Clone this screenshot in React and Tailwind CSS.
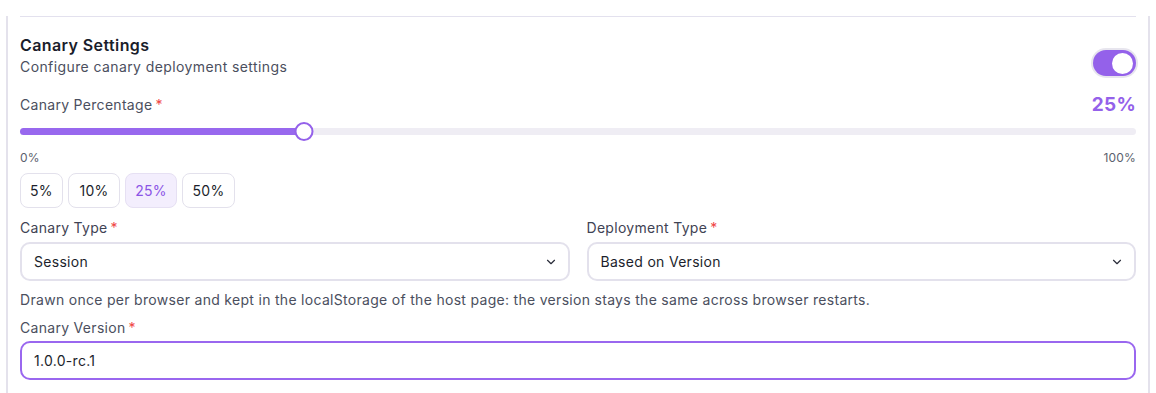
const Req = () => <span className="text-[#ef4444] ml-[3px]">*</span>;

const Chevron = () => (
  <svg width="14" height="14" viewBox="0 0 24 24" fill="none" stroke="#2a2d3a" strokeWidth="2" strokeLinecap="round" strokeLinejoin="round">
    <path d="m6 9 6 6 6-6" />
  </svg>
);

const Select = ({ label, value }) => (
  <div className="flex-1 flex flex-col">
    <label className="text-[14px] text-[#3f4354] leading-[20px] mb-[4px] tracking-[0.3px]">
      {label}
      <Req />
    </label>
    <div className="h-[39px] rounded-[10px] border-2 border-[#e3e1ec] bg-white flex items-center justify-between pl-[12px] pr-[10px]">
      <span className="text-[14px] text-[#1c1f2c] tracking-[0.3px]">{value}</span>
      <Chevron />
    </div>
  </div>
);

export default function App() {
  const presets = [
    { label: "5%", w: "w-[43px]" },
    { label: "10%", w: "w-[52px]" },
    { label: "25%", w: "w-[52px]" },
    { label: "50%", w: "w-[53px]" },
  ];
  const pct = 25;
  const thumbPos = `calc(${pct / 100} * (100% - 19px) + 9.5px)`;
  return (
    <div className="w-[1156px] h-[393px] bg-white overflow-hidden" style={{ fontFamily: "Inter, 'Noto Sans', sans-serif" }}>
      <div className="mx-[6px] h-[391px] border-x-2 border-b-2 border-[#e4e2ec] rounded-b-[12px] px-[12px]">
        <div className="border-t border-[#e3e1ee] mt-[16px]" />
        <div className="flex items-end justify-between mt-[17px]">
          <div>
            <h3 className="text-[16px] font-semibold text-[#1a1d2b] leading-[22px] tracking-[0.4px]">Canary Settings</h3>
            <p className="text-[14px] text-[#4b4f5e] leading-[20px] mt-[1px] tracking-[0.4px]">Configure canary deployment settings</p>
          </div>
          <div className="w-[43px] h-[26px] rounded-full bg-[#9461ea] ring-2 ring-[#e7e5ee] flex items-center justify-end px-[3px] mb-[1px]">
            <div className="w-[21px] h-[21px] rounded-full bg-white" />
          </div>
        </div>

        <div className="flex items-center justify-between mt-[16px]">
          <span className="text-[14px] text-[#4b4f5e] leading-[20px] tracking-[0.3px]">
            Canary Percentage
            <Req />
          </span>
          <span className="text-[19px] font-bold text-[#9461ea] leading-[24px] tracking-[0.3px]">25%</span>
        </div>

        <div className="relative h-[20px] mt-[4px] flex items-center">
          <div className="w-full h-[7px] rounded-full bg-[#efedf4]">
            <div className="h-full rounded-full bg-[#9868ee]" style={{ width: thumbPos }} />
          </div>
          <div
            className="absolute w-[19px] h-[19px] rounded-full bg-white border-2 border-[#9461ea] -translate-x-1/2"
            style={{ left: thumbPos }}
          />
        </div>

        <div className="flex justify-between text-[12px] text-[#5b5f6e] mt-[9px] leading-[16px] tracking-[0.2px]">
          <span>0%</span>
          <span>100%</span>
        </div>

        <div className="flex gap-[5px] mt-[7px]">
          {presets.map((p) => (
            <button
              key={p.label}
              className={`h-[35px] ${p.w} rounded-[8px] border text-[14px] tracking-[0.3px] ${
                p.label === "25%"
                  ? "bg-[#f3eefd] border-[#e6e0f3] text-[#8b55e6]"
                  : "bg-white border-[#e3e1ec] text-[#1c1f2c]"
              }`}
            >
              {p.label}
            </button>
          ))}
        </div>

        <div className="flex gap-[17px] mt-[10px]">
          <Select label="Canary Type" value="Session" />
          <Select label="Deployment Type" value="Based on Version" />
        </div>

        <p className="text-[14px] text-[#4b4f5e] mt-[10px] leading-[18px] tracking-[0.3px]">
          Drawn once per browser and kept in the localStorage of the host page: the version stays the same across browser restarts.
        </p>

        <div className="flex flex-col mt-[9px]">
          <label className="text-[14px] text-[#4b4f5e] leading-[20px] mb-[3px] tracking-[0.3px]">
            Canary Version
            <Req />
          </label>
          <div className="h-[39px] rounded-[10px] border-2 border-[#9a67ef] bg-white flex items-center pl-[12px]">
            <span className="text-[14px] text-[#1c1f2c] tracking-[0.3px]">1.0.0-rc.1</span>
          </div>
        </div>
      </div>
    </div>
  );
}
